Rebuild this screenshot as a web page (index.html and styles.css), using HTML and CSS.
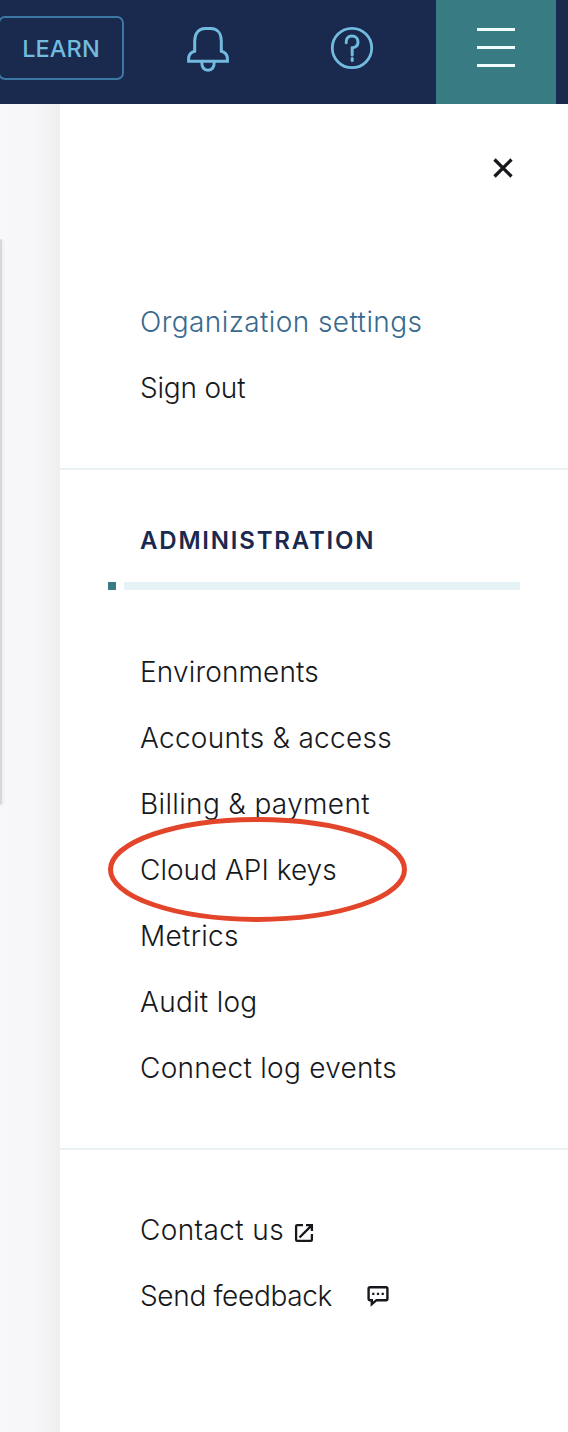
FILE: index.html
```html
<!DOCTYPE html>
<html lang="en">
<head>
<meta charset="utf-8">
<title>Administration menu</title>
<link rel="stylesheet" href="styles.css">
</head>
<body>
<header class="topbar">
  <button class="learn">LEARN</button>
  <button class="icon-button bell" aria-label="Notifications">
    <svg width="44" height="48" viewBox="0 0 44 48" fill="none" stroke="#72bbdf" stroke-width="3">
      <path d="M2.6 37.3V35C2.6 31 4.7 28.2 8.7 27.2V17C8.7 9.2 12.8 4.6 19 4.6H25C31.2 4.6 35.3 9.2 35.3 17V27.2C39.3 28.2 41.4 31 41.4 35V37.3Z"/>
      <path d="M15.7 37.3C15.7 43.5 18 46.3 22 46.3S28.3 43.5 28.3 37.3"/>
    </svg>
  </button>
  <button class="icon-button help" aria-label="Help">
    <svg width="44" height="44" viewBox="0 0 44 44" fill="none" stroke="#72bbdf" stroke-width="2.8">
      <circle cx="22" cy="22" r="19.7"/>
      <path d="M16.2 16.8C15.7 12.6 18.3 10 22 10S28 12.6 28 15.9C28 19.2 26 21.3 22.2 21.8V29" stroke-width="3" stroke-linecap="round"/>
      <path d="M22.2 32.6V34.4" stroke-width="3" stroke-linecap="round"/>
    </svg>
  </button>
  <button class="menu-button" aria-label="Menu"><span></span><span></span><span></span></button>
</header>
<div class="content">
  <div class="backdrop"><div class="card-edge"></div></div>
  <aside class="drawer">
    <div class="drawer-head">
      <svg class="close" width="24" height="24" viewBox="0 0 24 24" stroke="#16181c" stroke-width="3.3"><path d="M3.5 3.5L20.5 20.5M20.5 3.5L3.5 20.5"/></svg>
    </div>
    <nav class="account">
      <a class="item active"><span>Organization settings</span></a>
      <a class="item sign-out"><span>Sign out</span></a>
    </nav>
    <section class="admin">
      <h2 class="title">ADMINISTRATION</h2>
      <div class="rule"><i class="rule-dot"></i><i class="rule-line"></i></div>
      <nav>
        <a class="item environments"><span>Environments</span></a>
        <a class="item"><span>Accounts &amp; access</span></a>
        <a class="item billing"><span>Billing &amp; payment</span></a>
        <a class="item marked"><span>Cloud API keys</span>
          <svg class="marker" width="304" height="108" viewBox="0 0 304 108" fill="none" stroke="#e2452a" stroke-width="5"><ellipse cx="151.5" cy="54.4" rx="147" ry="50"/></svg>
        </a>
        <a class="item"><span>Metrics</span></a>
        <a class="item"><span>Audit log</span></a>
        <a class="item"><span>Connect log events</span></a>
      </nav>
    </section>
    <nav class="support">
      <a class="item contact"><span>Contact us</span>
        <svg width="20" height="20" viewBox="0 0 20 20" fill="none" stroke="#16181c" stroke-width="2.3"><path d="M9 2.1H3.2Q2.1 2.1 2.1 3.2V16.8Q2.1 17.9 3.2 17.9H16.8Q17.9 17.9 17.9 16.8V11M12 2.1H17.9V8M17.4 2.6L5.5 14.5"/></svg>
      </a>
      <a class="item feedback"><span>Send feedback</span>
        <svg width="22" height="22" viewBox="0 0 22 22" fill="none" stroke="#16181c" stroke-width="2.4"><path d="M3 2.3H19Q20.4 2.3 20.4 3.7V13.8Q20.4 15.2 19 15.2H9.5L4.8 19.2V15.2H3Q1.6 15.2 1.6 13.8V3.7Q1.6 2.3 3 2.3Z"/><path d="M5.2 8.8H7.4M9.9 8.8H12.1M14.6 8.8H16.8" stroke-width="2.2"/></svg>
      </a>
    </nav>
  </aside>
</div>
</body>
</html>
```
FILE: styles.css
```css
* { box-sizing: border-box; }
body { margin: 0; width: 568px; height: 1432px; overflow: hidden; background: #fff; font-family: Inter, "Liberation Sans", sans-serif; color: #16181c; }
button { font: inherit; padding: 0; background: none; border: 0; }
svg { display: block; flex: none; }
.topbar { height: 104px; display: flex; align-items: center; background: #1a294e; padding-right: 12px; }
.learn { width: 126px; height: 64px; margin: -8px 0 0 -2px; border: 2px solid #3c78a4; border-radius: 7px; color: #72bbdf; font-size: 23.5px; font-weight: 450; letter-spacing: .1px; padding-top: 1px; }
.icon-button { display: flex; }
.bell { margin: -8px 0 0 62px; }
.help { margin: -8px 0 0 100px; }
.menu-button { width: 120px; height: 104px; margin-left: auto; background: #387b82; display: flex; flex-direction: column; align-items: center; gap: 15px; padding-top: 28px; }
.menu-button span { width: 38px; height: 3px; background: #f0fbfb; }
.content { display: flex; height: 1328px; }
.backdrop { width: 60px; padding-top: 135px; background: linear-gradient(90deg, #f8f8fb 0, #f7f7fa 60%, #f2f2f3 85%, #eeeef0 100%); }
.card-edge { width: 2px; height: 566px; border-radius: 0 2px 2px 0; background: #d8d8da; box-shadow: 1px 1px 3px #e6e6e9; }
.drawer { width: 508px; background: #fff; }
.drawer-head { height: 185px; padding: 52px 53px 0 0; display: flex; justify-content: flex-end; }
.account { height: 181px; border-bottom: 2px solid #e9f1f4; }
.item { height: 66px; padding-left: 80px; display: flex; align-items: center; font-size: 28px; font-weight: 300; letter-spacing: .28px; white-space: nowrap; }
.active { color: #38698e; letter-spacing: .42px; }
.sign-out { letter-spacing: -.2px; }
.environments { letter-spacing: .15px; }
.billing { letter-spacing: .35px; }
.admin { height: 680px; border-bottom: 2px solid #e9f1f4; padding-top: 51px; }
.title { margin: 0; padding-left: 80px; height: 40px; line-height: 40px; font-size: 24px; font-weight: 600; letter-spacing: 1.8px; color: #1a294e; }
.rule { display: flex; gap: 8px; padding: 21px 48px 49px; }
.rule-dot { width: 8px; height: 8px; background: #387b82; }
.rule-line { flex: 1; height: 8px; background: #e7f2f7; }
.marked { position: relative; letter-spacing: .03px; }
.marker { position: absolute; left: 46px; top: -22px; }
.support { padding-top: 47px; }
.contact { gap: 10px; letter-spacing: .38px; }
.contact svg { margin-top: 5px; }
.feedback { gap: 35px; letter-spacing: -.33px; }
```
